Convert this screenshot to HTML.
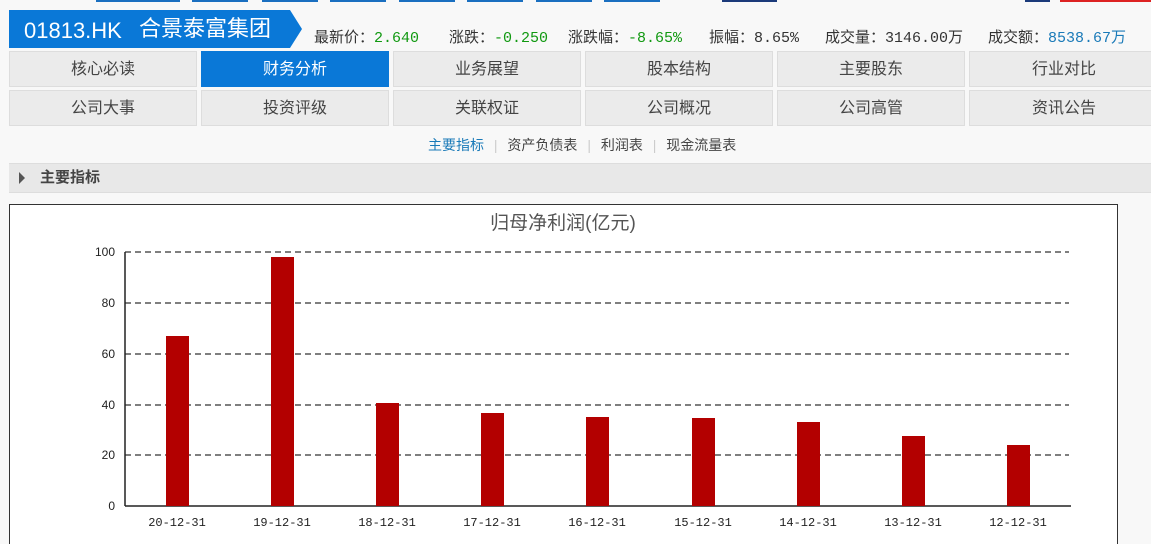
<!DOCTYPE html>
<html><head><meta charset="utf-8"><style>
*{margin:0;padding:0;box-sizing:border-box}
body{width:1151px;height:539px;overflow:hidden;background:#f8f8f8;font-family:"Liberation Sans","Noto Sans CJK SC",sans-serif;position:relative;color:#333}
.a{position:absolute}
.tb{position:absolute;height:2px;top:0;background:#1a6fc0}
.tab{position:absolute;width:188px;height:36px;background:#ebebeb;border:1px solid #ddd;text-align:center;line-height:35px;font-size:16px;color:#444}
.tab.on{background:#0a78d7;color:#fff;border-color:#0a78d7}
.q{position:absolute;top:26px;font-size:15px;color:#333;font-family:"Liberation Mono","Noto Sans CJK SC",monospace;white-space:nowrap}
.g{color:#119911}.b{color:#1a7ab8}
</style></head><body>
<div class="tb" style="left:96px;width:84px"></div><div class="tb" style="left:192px;width:56px"></div><div class="tb" style="left:262px;width:56px"></div><div class="tb" style="left:330px;width:56px"></div><div class="tb" style="left:399px;width:56px"></div><div class="tb" style="left:467px;width:56px"></div><div class="tb" style="left:536px;width:56px"></div><div class="tb" style="left:604px;width:56px"></div><div class="tb" style="left:722px;width:55px;background:#1b3a7a"></div><div class="tb" style="left:1025px;width:25px;background:#1b3a7a"></div><div class="tb" style="left:1060px;width:91px;background:#d22"></div>
<svg class="a" style="left:9px;top:10px" width="295" height="38"><polygon points="0,0 281,0 293,19 281,38 0,38" fill="#0a78d7"/></svg>
<div class="a" style="left:24px;top:17px;font-size:22px;color:#fff;line-height:28px">01813.HK</div>
<div class="a" style="left:139px;top:15px;font-size:22px;color:#fff;line-height:28px">合景泰富集团</div>
<div class="q" style="left:314px">最新价：<span class="g">2.640</span></div>
<div class="q" style="left:449px">涨跌：<span class="g">-0.250</span></div>
<div class="q" style="left:568px">涨跌幅：<span class="g">-8.65%</span></div>
<div class="q" style="left:709px">振幅：8.65%</div>
<div class="q" style="left:825px">成交量：3146.00万</div>
<div class="q" style="left:988px">成交额：<span class="b">8538.67万</span></div>
<div class="tab" style="left:9px;top:51px">核心必读</div><div class="tab on" style="left:201px;top:51px">财务分析</div><div class="tab" style="left:393px;top:51px">业务展望</div><div class="tab" style="left:585px;top:51px">股本结构</div><div class="tab" style="left:777px;top:51px">主要股东</div><div class="tab" style="left:969px;top:51px;width:190px">行业对比</div>
<div class="tab" style="left:9px;top:90px">公司大事</div><div class="tab" style="left:201px;top:90px">投资评级</div><div class="tab" style="left:393px;top:90px">关联权证</div><div class="tab" style="left:585px;top:90px">公司概况</div><div class="tab" style="left:777px;top:90px">公司高管</div><div class="tab" style="left:969px;top:90px;width:190px">资讯公告</div>
<div class="a" style="left:428px;top:136px;font-size:14px;color:#444;line-height:18px;white-space:nowrap"><span class="b">主要指标</span> <span style="color:#ccc;margin:0 6px">|</span> 资产负债表 <span style="color:#ccc;margin:0 6px">|</span> 利润表 <span style="color:#ccc;margin:0 6px">|</span> 现金流量表</div>
<div class="a" style="left:9px;top:163px;width:1142px;height:30px;background:#e8e8e8;border-top:1px solid #ddd;border-bottom:1px solid #ddd"></div>
<svg class="a" style="left:19px;top:172px" width="8" height="12"><polygon points="0,0 6,6 0,12" fill="#555"/></svg>
<div class="a" style="left:40px;top:168px;font-size:15px;font-weight:bold;color:#444;line-height:20px">主要指标</div>
<svg class="a" style="left:9px;top:204px" width="1109" height="340">
<rect x="0.5" y="0.5" width="1108" height="340" fill="#fff" stroke="#333"/>
<text x="554" y="25" text-anchor="middle" font-size="19" fill="#555" font-family="Liberation Sans,Noto Sans CJK SC,sans-serif">归母净利润(亿元)</text>
<g stroke="#555" stroke-width="1.5" stroke-dasharray="6,4">
<line x1="116" y1="48" x2="1060" y2="48"/><line x1="116" y1="99" x2="1060" y2="99"/><line x1="116" y1="150" x2="1060" y2="150"/><line x1="116" y1="201" x2="1060" y2="201"/><line x1="116" y1="251" x2="1060" y2="251"/></g>
<line x1="116" y1="48" x2="116" y2="302" stroke="#222" stroke-width="1.5"/>
<line x1="116" y1="302" x2="1062" y2="302" stroke="#222" stroke-width="1.5"/>
<g fill="#b30000">
<rect x="157" y="132" width="23" height="170"/><rect x="262" y="53" width="23" height="249"/><rect x="367" y="199" width="23" height="103"/><rect x="472" y="209" width="23" height="93"/><rect x="577" y="213" width="23" height="89"/><rect x="683" y="214" width="23" height="88"/><rect x="788" y="218" width="23" height="84"/><rect x="893" y="232" width="23" height="70"/><rect x="998" y="241" width="23" height="61"/></g>
<g font-size="12" fill="#222" text-anchor="end" font-family="Liberation Sans,sans-serif">
<text x="106" y="52">100</text><text x="106" y="103">80</text><text x="106" y="154">60</text><text x="106" y="205">40</text><text x="106" y="255">20</text><text x="106" y="306">0</text></g>
<g font-size="12" fill="#222" text-anchor="middle" font-family="Liberation Mono,monospace">
<text x="168" y="322">20-12-31</text><text x="273" y="322">19-12-31</text><text x="378" y="322">18-12-31</text><text x="483" y="322">17-12-31</text><text x="588" y="322">16-12-31</text><text x="694" y="322">15-12-31</text><text x="799" y="322">14-12-31</text><text x="904" y="322">13-12-31</text><text x="1009" y="322">12-12-31</text></g>
</svg>
</body></html>
